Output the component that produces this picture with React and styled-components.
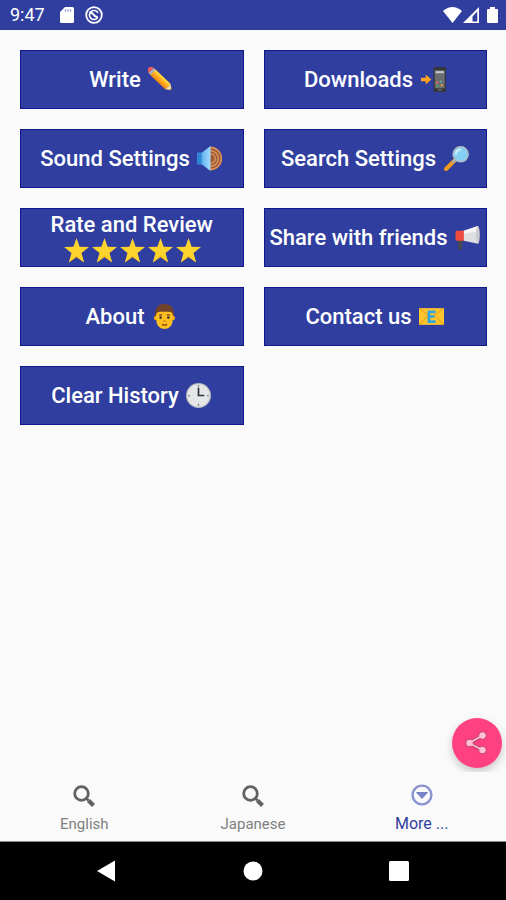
import styled, { createGlobalStyle } from "styled-components";

const App = () => {
  return (
    <Screen>
      <GlobalStyle />
      <StatusBar>
        <span>9:47</span>
        <SdCardIcon />
        <SyncIcon />
        <StatusIcons>
          <WifiIcon />
          <SignalIcon />
          <BatteryIcon />
        </StatusIcons>
      </StatusBar>

      <Content>
        <MenuGrid>
          <MenuButton type="button">Write <Pencil /></MenuButton>
          <MenuButton type="button">Downloads <PhoneArrow /></MenuButton>
          <MenuButton type="button">Sound Settings <Speaker /></MenuButton>
          <MenuButton type="button">Search Settings <Magnifier /></MenuButton>
          <MenuButton type="button">
            Rate and Review
            <StarLine>
              {[1, 2, 3, 4, 5].map((n) => <Star key={n} />)}
            </StarLine>
          </MenuButton>
          <MenuButton type="button">Share with friends <Megaphone /></MenuButton>
          <MenuButton type="button">About <Man /></MenuButton>
          <MenuButton type="button">Contact us <Email /></MenuButton>
          <MenuButton type="button">Clear History <Clock /></MenuButton>
        </MenuGrid>
        <ShareFab type="button" aria-label="Share">
          <ShareIcon />
        </ShareFab>
      </Content>

      <Tabs>
        <Tab href="#english">
          <SearchIcon />
          <TabLabel>English</TabLabel>
        </Tab>
        <Tab href="#japanese">
          <SearchIcon />
          <TabLabel>Japanese</TabLabel>
        </Tab>
        <Tab href="#more" $active>
          <MoreIcon />
          <TabLabel $active>More ...</TabLabel>
        </Tab>
      </Tabs>

      <SystemBar>
        <SystemButton type="button" aria-label="Back">
          <svg width="20" height="22" viewBox="0 0 20 22"><path d="M0 11 18 .5v21z" fill="#fff" /></svg>
        </SystemButton>
        <SystemButton type="button" aria-label="Home">
          <svg width="20" height="20" viewBox="0 0 20 20"><circle cx="10" cy="10" r="9.5" fill="#fff" /></svg>
        </SystemButton>
        <SystemButton type="button" aria-label="Recent apps">
          <svg width="20" height="20" viewBox="0 0 20 20"><rect width="20" height="20" rx="1.5" fill="#fff" /></svg>
        </SystemButton>
      </SystemBar>
    </Screen>
  );
};

export default App;

/* status bar icons */

const SdCardIcon = () => (
  <svg width="14" height="16" viewBox="0 0 14 16">
    <path d="M5 0h7.5Q14 0 14 1.500v13Q14 16 12.500 16h-11Q0 16 0 14.500V5z" fill="#fff" />
    <path d="M5.500 2.200v2.600M8 2.200v2.600M10.500 2.200v2.600" stroke="#8e97cd" strokeWidth="1.200" />
  </svg>
);

const SyncIcon = () => (
  <svg width="18" height="18" viewBox="0 0 18 18" fill="none" stroke="#fff">
    <circle cx="9" cy="9" r="7.800" strokeWidth="1.800" />
    <path d="M12.800 11.300A4.500 4.500 0 1 1 13 7" strokeWidth="1.600" />
    <path d="M4.500 6.500Q7 6 8.500 8.500T12.800 11" strokeWidth="2" />
  </svg>
);

const WifiIcon = () => (
  <svg width="19" height="16" viewBox="0 0 19 16">
    <path d="M0 4Q9.500-4 19 4L9.500 16z" fill="#fff" />
  </svg>
);

const SignalIcon = () => (
  <svg width="16" height="16" viewBox="0 0 16 16">
    <path fillRule="evenodd" d="M0 16 16 0v16zM9.500 14.500h4.800V4.500L9.500 9.500z" fill="#fff" />
  </svg>
);

const BatteryIcon = () => (
  <svg width="11" height="16" viewBox="0 0 11 16">
    <path d="M3 0h5v2h2q1 0 1 1v12q0 1-1 1H1q-1 0-1-1V3q0-1 1-1h2z" fill="#fff" />
  </svg>
);

/* emoji */

const Pencil = () => (
  <Emoji viewBox="0 0 24 24">
    <g transform="rotate(44 12 12)">
      <path d="M22 8.500 27 12l-5 3.500z" fill="#f6dfa4" />
      <path d="m25.300 10.800 1.900 1.200-1.900 1.200z" fill="#4b4b43" />
      <path d="M1 8.500h21v7H1z" fill="#ffa81f" />
      <path d="M1 8.500h21v2.300H1z" fill="#ffd33d" />
      <path d="M1 13.700h21v1.800H1z" fill="#ed8b13" />
      <path d="M-.500 8.500H2v7H-.500z" fill="#a8b3bd" />
      <path d="M-.500 8.500h-1.500q-2 0-2 2v3q0 2 2 2h1.500z" fill="#f15757" />
    </g>
  </Emoji>
);

const PhoneArrow = () => (
  <Emoji viewBox="0 0 24 24">
    <path d="M0 10.300h4.500V7.300l5.500 4.700-5.500 4.700v-3H0z" fill="#ffa21c" />
    <rect x="12" y="0" width="12" height="24" rx="1.500" fill="#343638" />
    <rect x="13.200" y="3" width="9.600" height="17.500" fill="#696d70" />
    <rect x="14" y="4" width="8" height="2" fill="#c5c8ca" />
    <rect x="14.500" y="14" width="2" height="2" fill="#ef6b55" />
    <rect x="18" y="13" width="2" height="2" fill="#63a8a5" />
    <rect x="15" y="17.500" width="2" height="2" fill="#53a86c" />
    <rect x="19" y="16.500" width="2" height="2" fill="#e7a04a" />
    <path d="M16 22h4" stroke="#777" />
  </Emoji>
);

const Speaker = () => (
  <Emoji viewBox="0 0 24 24">
    <defs>
      <linearGradient id="cone">
        <stop offset="0" stopColor="#3c9be8" />
        <stop offset="1" stopColor="#a4dcff" />
      </linearGradient>
    </defs>
    <path d="M12.500 .500A11.500 11.500 0 0 1 12.500 23.500z" fill="#9c5d3c" />
    <path d="M13 1.500a10.500 10.500 0 0 1 0 21M13 4.500a7.500 7.500 0 0 1 0 15M13 7.500a4.500 4.500 0 0 1 0 9" fill="none" stroke="#e0935a" strokeWidth="1.400" />
    <path d="M0 6.500h4.500L13 0v24L4.500 17.500H0z" fill="url(#cone)" />
    <path d="M0 6.500h4.500v11H0z" fill="#3187d5" />
  </Emoji>
);

const Magnifier = () => (
  <Emoji viewBox="0 0 24 24">
    <path d="m9.500 14.500-7.500 7.500" stroke="#f29a1f" strokeWidth="4" strokeLinecap="round" />
    <path d="m11 13-3 3" stroke="#a7adb2" strokeWidth="2.500" />
    <circle cx="16" cy="8" r="7.200" fill="#85cff5" stroke="#b2bdc5" strokeWidth="1.400" />
    <path d="M11.500 7.500a4.500 4.500 0 0 1 4-4" fill="none" stroke="#c8efff" strokeWidth="2" strokeLinecap="round" />
  </Emoji>
);

const Star = () => (
  <Emoji viewBox="0 0 24 24">
    <path d="m12 0 3 8.500 9 .200-7.200 5.600 2.600 9.200L12 18.200l-7.400 5.300 2.600-9.200L0 8.700l9-.200z" fill="#fdd32d" />
    <path d="m19.400 23.500-7.400-5.300-7.400 5.300 7.400-7z" fill="#f5ba1b" />
  </Emoji>
);

const Megaphone = () => (
  <Emoji viewBox="0 0 24 24">
    <path d="M2.500 13h5l-1 11H3.500z" fill="#454b50" />
    <path d="M1.500 5.500H9V15H1.500Q.500 15 .500 14V6.500Q.500 5.500 1.500 5.500z" fill="#ef4b3f" />
    <path d="M8.500 5.500 22 1v17L8.500 15z" fill="#dedfe0" />
    <path d="M8.500 5.500 22 1v5L8.500 8.500z" fill="#f5f5f5" />
    <ellipse cx="22" cy="9.500" rx="1.800" ry="8.500" fill="#c9cbcd" />
  </Emoji>
);

const Man = () => (
  <Emoji viewBox="0 0 24 24">
    <path d="M3 12Q2 0 12 0t9 12l-1.500 3h-15z" fill="#70432d" />
    <circle cx="4" cy="13.500" r="2.200" fill="#f2a912" />
    <circle cx="20" cy="13.500" r="2.200" fill="#f2a912" />
    <path d="M4 9.500Q5 7.500 8 7.500h8q3 0 4 2V14q0 10-8 10T4 14z" fill="#fdbf20" />
    <path d="M6.800 10.500h3M14.200 10.500h3" stroke="#70432d" strokeWidth="1.200" />
    <circle cx="8.300" cy="13" r="1.300" fill="#3f3a36" />
    <circle cx="15.700" cy="13" r="1.300" fill="#3f3a36" />
    <path d="M10.500 16.500h3" stroke="#d98a12" strokeWidth="1.200" />
    <path d="M9.500 19.500q2.500 1.500 5 0" fill="none" stroke="#8a4a20" strokeWidth="1.300" />
  </Emoji>
);

const Email = () => (
  <Emoji viewBox="0 0 24 24">
    <rect y="4" width="24" height="16" fill="#ffc52d" />
    <path d="m0 4 12 9 12-9M0 20l8-8M24 20l-8-8" fill="none" stroke="#e8a51d" />
    <path d="M16 7.500H9.500v9.500H16M9.500 12h5.500" fill="none" stroke="#35a6dd" strokeWidth="2.600" />
  </Emoji>
);

const Clock = () => (
  <Emoji viewBox="0 0 24 24">
    <circle cx="12" cy="12" r="12" fill="#b9bec2" />
    <circle cx="12" cy="12" r="10.800" fill="#e5e6e7" />
    <path d="M12 2v2M12 20v2M2 12h2M20 12h2" stroke="#85898c" strokeWidth="1.200" />
    <path d="M12 4.500V12h5.500" fill="none" stroke="#303336" strokeWidth="1.600" />
  </Emoji>
);

/* tab and share icons */

const SearchIcon = () => (
  <svg width="24" height="24" viewBox="0 0 24 24" fill="none" stroke="#626262">
    <circle cx="9.500" cy="9.500" r="6.800" strokeWidth="2.800" />
    <path d="m14 14 2.500 2.500" strokeWidth="2.500" />
    <path d="m16.500 16.500 5 5" strokeWidth="4.200" />
  </svg>
);

const MoreIcon = () => (
  <svg width="24" height="24" viewBox="0 0 24 24">
    <circle cx="12" cy="11" r="9.400" fill="none" stroke="#8a92d0" strokeWidth="2.400" />
    <path d="M6.500 8.500h11L12 14.500z" fill="#7a83c8" stroke="#7a83c8" strokeLinejoin="round" />
  </svg>
);

const ShareIcon = () => (
  <svg width="24" height="24" viewBox="0 0 24 24">
    <path d="M17.500 4.500 4 12l13.500 7" fill="none" stroke="#b03766" strokeWidth="3.400" />
    <g fill="#ffc0d5" stroke="#b03766" strokeWidth=".8">
      <circle cx="17.500" cy="4.500" r="3.800" />
      <circle cx="4.500" cy="12" r="3.800" />
      <circle cx="17.500" cy="19" r="3.800" />
    </g>
    <path d="M17.500 4.500 4 12l13.500 7" fill="none" stroke="#ffc0d5" strokeWidth="1.800" />
  </svg>
);

const GlobalStyle = createGlobalStyle`
  * {
    box-sizing: border-box;
  }

  body {
    margin: 0;
    background: #fafafa;
    font-family: Roboto, sans-serif;
  }
`;

const Screen = styled.div`
  min-height: 100vh;
  display: flex;
  flex-direction: column;
`;

const StatusBar = styled.header`
  height: 30px;
  padding: 0 8px 0 10px;
  display: flex;
  align-items: center;
  background: #303f9f;
  color: #fff;
  font-size: 18px;
  line-height: 32px;

  span {
    margin-right: 15px;
  }

  svg + svg {
    margin-left: 11px;
  }
`;

const StatusIcons = styled.div`
  margin-left: auto;
  display: flex;
  align-items: center;

  svg + svg {
    margin-left: 1px;
  }

  svg + svg:last-child {
    margin-left: 8px;
  }
`;

const Content = styled.main`
  flex: 1;
  position: relative;
  overflow: hidden;
  padding: 20px 19px 20px 20px;
`;

const MenuGrid = styled.div`
  display: grid;
  grid-template-columns: 1fr 1fr;
  gap: 20px;
`;

const MenuButton = styled.button`
  height: 59px;
  padding: 0;
  border: 1px solid #10188c;
  background: #303f9f;
  color: #fff;
  font-family: inherit;
  font-size: 22px;
  font-weight: 500;
  line-height: 26px;
  white-space: nowrap;
  cursor: pointer;
`;

const StarLine = styled.div`
  height: 26px;
`;

const Emoji = styled.svg`
  width: 25px;
  height: 25px;
  margin: 0 1px 0 2px;
  vertical-align: -5px;
`;

const ShareFab = styled.button`
  position: absolute;
  right: 4px;
  bottom: 4px;
  width: 50px;
  height: 50px;
  padding: 0;
  border: none;
  border-radius: 50%;
  background: #ff4081;
  box-shadow: 0 4px 8px rgba(0, 0, 0, 0.2);
  display: flex;
  align-items: center;
  justify-content: center;
  cursor: pointer;
`;

const Tabs = styled.nav`
  height: 70px;
  padding-top: 12px;
  display: flex;
  border-bottom: 1px solid #8a8a8a;
`;

const Tab = styled.a`
  flex: 1;
  display: flex;
  flex-direction: column;
  align-items: center;
  gap: 6px;
  color: ${({ $active }) => ($active ? "#303f9f" : "#808080")};
  text-decoration: none;
`;

const TabLabel = styled.span`
  font-size: ${({ $active }) => ($active ? "16px" : "15px")};
  line-height: 20px;
`;

const SystemBar = styled.footer`
  height: 58px;
  padding: 0 34px;
  display: flex;
  background: #000;
`;

const SystemButton = styled.button`
  flex: 1;
  padding: 0;
  border: none;
  background: none;
  display: flex;
  align-items: center;
  justify-content: center;
  cursor: pointer;
`;
